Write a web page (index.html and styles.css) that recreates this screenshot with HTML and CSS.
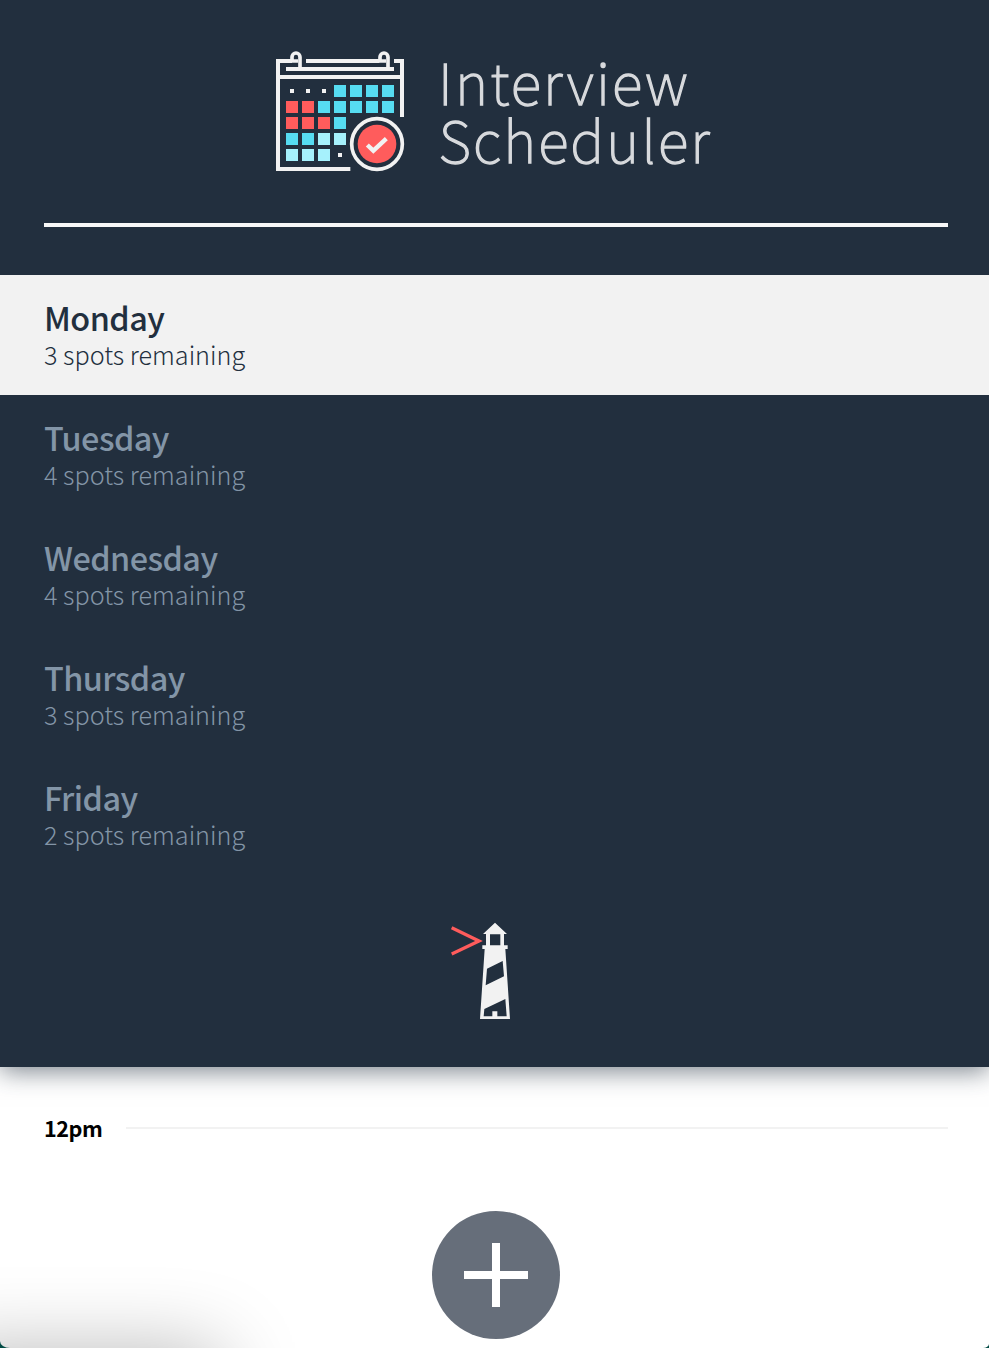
FILE: index.html
```html
<!DOCTYPE html>
<html lang="en">
<head>
<meta charset="utf-8">
<title>Interview Scheduler</title>
<link rel="stylesheet" href="styles.css">
</head>
<body>
<main class="layout">
  <section class="sidebar">
    <header class="brand">
      <svg class="brand-calendar" viewBox="30 33 387 363" fill="none">
        <g stroke="#f2f2f2" stroke-width="12">
          <path d="M78 63H36V387H253M120 63H340M384 63H408V231M60 87H384M36 111H408"/>
          <path stroke-width="11" d="M102 87V51a12 12 0 0 0 -24 0V63H96M366 87V51a12 12 0 0 0 -24 0V63H360"/>
        </g>
        <path fill="#f2f2f2" d="M72 147h12v12H72zM120 147h12v12h-12zM168 147h12v12h-12zM216 339h12v12h-12z"/>
        <path fill="#56dcf2" d="M204 135h36v36h-36zM252 135h36v36h-36zM300 135h36v36h-36zM348 135h36v36h-36zM156 183h36v36h-36zM204 183h36v36h-36zM252 183h36v36h-36zM300 183h36v36h-36zM348 183h36v36h-36zM204 231h36v36h-36zM60 279h36v36H60zM108 279h36v36h-36z"/>
        <path fill="#ff5c5c" d="M60 183h36v36H60zM108 183h36v36h-36zM60 231h36v36H60zM108 231h36v36h-36zM156 231h36v36h-36z"/>
        <path fill="#a6f1fc" d="M156 279h36v36h-36zM204 279h36v36h-36zM60 327h36v36H60zM108 327h36v36h-36zM156 327h36v36h-36z"/>
        <circle cx="333" cy="312" r="76" stroke="#f2f2f2" stroke-width="11"/>
        <circle cx="333" cy="312" r="58" fill="#ff5c5c"/>
        <path d="M304 315L322 332L361 296" stroke="#f2f2f2" stroke-width="13"/>
      </svg>
      <svg class="brand-name" viewBox="0 0 274 121">
        <text x="-2" y="53.5" textLength="249.5">Interview</text>
        <text x="-1.5" y="112" textLength="271">Scheduler</text>
      </svg>
    </header>
    <hr class="separator">
    <ul class="days">
      <li class="day day-selected"><h2 class="day-name">Monday</h2><p class="day-spots">3 spots remaining</p></li>
      <li class="day"><h2 class="day-name">Tuesday</h2><p class="day-spots">4 spots remaining</p></li>
      <li class="day"><h2 class="day-name">Wednesday</h2><p class="day-spots">4 spots remaining</p></li>
      <li class="day"><h2 class="day-name">Thursday</h2><p class="day-spots">3 spots remaining</p></li>
      <li class="day"><h2 class="day-name">Friday</h2><p class="day-spots">2 spots remaining</p></li>
    </ul>
    <svg class="lighthouse" viewBox="63 36 177 291">
      <path d="M65 53L147 93L65 132" fill="none" stroke="#ff5c5c" stroke-width="10"/>
      <path fill="#f2f2f2" fill-rule="evenodd" d="M195 38L231 72H222V106H233V117H226L240 327H150L164 117H157V106H168V72H159zM180 73V106H211V73zM171 176L167 226L222 199L218 153zM163 297L161 319H187V304H202V319H230L226 267z"/>
    </svg>
  </section>
  <section class="schedule">
    <header class="hour"><h4 class="hour-label">12pm</h4><hr class="hour-line"></header>
    <svg class="add" viewBox="0 0 128 128"><circle cx="64" cy="64" r="64" fill="#666e7a"/><path d="M32 64H96M64 32V96" stroke="#fff" stroke-width="8"/></svg>
  </section>
  <div class="corner-shadow"></div>
</main>
</body>
</html>
```
FILE: styles.css
```css
* { box-sizing: border-box; margin: 0; padding: 0; }
html { background: #024b45; }
body { font-family: "Noto Sans CJK SC", "Noto Sans", sans-serif; }
.layout {
  position: relative;
  height: 1348px;
  overflow: hidden;
  background: #fff;
  border-radius: 0 0 6px 10px / 0 0 4px 7px;
}
.sidebar {
  height: 1067px;
  background: #222f3e;
  box-shadow: 0 4px 24px rgba(34, 47, 62, .6);
  display: flex;
  flex-direction: column;
}
.brand { display: flex; padding: 51px 0 0 276px; gap: 35px; }
.brand-calendar { width: 129px; height: 121px; }
.brand-name { width: 274px; height: 121px; overflow: visible; font-size: 57px; font-weight: 100; fill: #d8dadd; stroke: #d8dadd; stroke-width: 1.3px; }
.separator { border: 0; height: 4px; background: #f8f8f8; margin: 51px 41px 48px 44px; }
.days { list-style: none; }
.day { height: 120px; padding: 24px 44px; color: #8395a7; }
.day-selected { background: #f2f2f2; color: #222f3e; }
.day-name { font-size: 32.4px; line-height: 36px; font-weight: 500; letter-spacing: -.55px; }
.day-spots { font-size: 25.2px; line-height: 38px; font-weight: 300; }
.lighthouse { width: 59px; height: 97px; margin: 47px 0 0 451px; }
.schedule { padding: 44px 41px 0 44px; }
.hour { display: flex; align-items: center; gap: 24px; height: 34px; }
.hour-label { width: 58px; font-size: 21.6px; line-height: 34px; font-weight: 700; letter-spacing: -.45px; color: #000; }
.hour-line { flex: 1; border: 0; height: 2px; background: #f2f2f2; }
.add { display: block; width: 128px; height: 128px; margin: 66px 0 0 388px; }
.corner-shadow {
  position: absolute;
  left: -60px;
  top: 1350px;
  width: 280px;
  height: 160px;
  box-shadow: 0 0 80px rgba(0, 0, 0, .28);
}
```
